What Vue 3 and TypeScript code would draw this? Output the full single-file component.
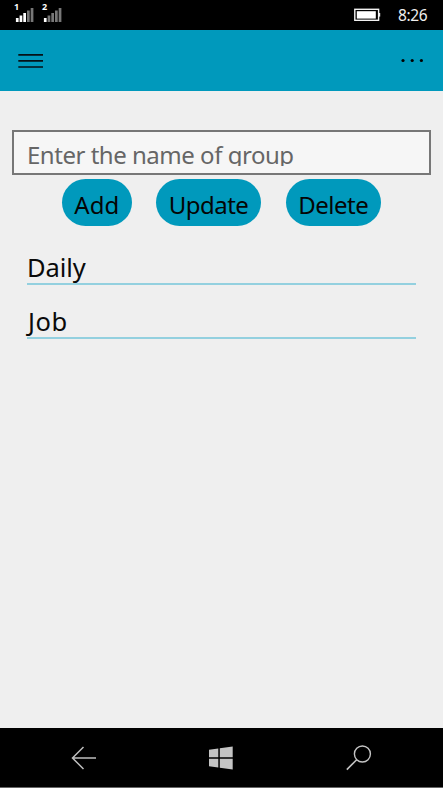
<script setup lang="ts">
import { ref } from 'vue'

interface Action {
  label: string
  kind: string
}

const actions: Action[] = [
  { label: 'Add', kind: 'add' },
  { label: 'Update', kind: 'update' },
  { label: 'Delete', kind: 'delete' },
]
const groups = ref<string[]>(['Daily', 'Job'])
const signals = [
  { slot: '1', strength: 3 },
  { slot: '2', strength: 1 },
]
const bars = [4, 6.5, 9, 11.5, 14]
</script>

<template>
  <div class="phone">
    <div class="status">
      <svg v-for="s in signals" :key="s.slot" class="signal" width="20" height="20" viewBox="0 0 20 20">
        <text x="0" y="6.3" class="slot">{{ s.slot }}</text>
        <rect
          v-for="(h, i) in bars"
          :key="i"
          :x="1.9 + i * 3.7"
          :y="18 - h"
          width="2.7"
          :height="h"
          :fill="i < s.strength ? '#fff' : '#777'"
        />
      </svg>
      <svg class="battery" width="27" height="14" viewBox="0 0 27 14">
        <rect x="0.8" y="1.3" width="23.8" height="11" fill="none" stroke="#f2f2f2" stroke-width="1.4" />
        <rect x="2.8" y="3.2" width="19" height="7.4" fill="#fff" />
        <rect x="24.6" y="5" width="1.6" height="3.6" fill="#eee" />
      </svg>
      <span class="clock">8:26</span>
    </div>

    <header class="appbar">
      <svg class="menu" width="26" height="16" viewBox="0 0 26 16">
        <path d="M0.3 1.8H25M0.3 7.9H25M0.3 14H25" stroke="#061116" stroke-width="1.7" fill="none" />
      </svg>
      <svg class="more" width="24" height="6" viewBox="0 0 24 6">
        <circle cx="2" cy="2.5" r="1.6" />
        <circle cx="11.2" cy="2.5" r="1.6" />
        <circle cx="20.4" cy="2.5" r="1.6" />
      </svg>
    </header>

    <main class="content">
      <div class="field"><span class="placeholder">Enter the name of group</span></div>
      <div class="actions">
        <button v-for="a in actions" :key="a.kind" class="action" :class="a.kind">{{ a.label }}</button>
      </div>
      <ul class="groups">
        <li v-for="g in groups" :key="g" :class="g.toLowerCase()"><span>{{ g }}</span></li>
      </ul>
    </main>

    <nav class="navbar">
      <svg class="back" width="26" height="24" viewBox="0 0 26 24">
        <path d="M25 12H1.5M12.5 1L1.5 12L12.5 23" fill="none" stroke="#bdbdbd" stroke-width="1.5" />
      </svg>
      <svg class="home" width="24" height="24" viewBox="0 0 24 24" fill="#c4c4c4">
        <path d="M0 3.8L9.3 2.5V11.3H0ZM10.8 2.2L23.7 0.4V11.3H10.8ZM0 12.7H9.3V21.5L0 20.2ZM10.8 12.7H23.7V23.6L10.8 21.8Z" />
      </svg>
      <svg class="find" width="26" height="26" viewBox="0 0 26 26" fill="none" stroke="#c4c4c4">
        <circle cx="16.4" cy="9" r="8" stroke-width="1.4" />
        <path d="M10.7 14.7L0.8 24.6" stroke-width="1.6" />
      </svg>
    </nav>
  </div>
</template>

<style>
body {
  background: #efefef;
}
</style>

<style scoped>
.phone {
  width: 443px;
  height: 788px;
  display: flex;
  flex-direction: column;
  overflow: hidden;
  background: #efefef;
  font-family: "Noto Sans", "Open Sans", sans-serif;
  color: #0a0a0a;
}
svg {
  display: block;
  flex: none;
}
.status {
  box-sizing: border-box;
  height: 29.5px;
  flex: none;
  display: flex;
  align-items: flex-start;
  background: #000;
  padding: 4px 14px 0 14px;
}
.signal {
  margin-right: 7.5px;
  overflow: visible;
}
.slot {
  font: bold 9px "Open Sans", sans-serif;
  fill: #fff;
}
.battery {
  margin: 4px 0 0 auto;
}
.clock {
  margin-left: 17px;
  width: 31px;
  font-size: 15.5px;
  line-height: 22px;
  color: #eee;
  white-space: nowrap;
  letter-spacing: -0.4px;
}
.appbar {
  box-sizing: border-box;
  height: 61.5px;
  flex: none;
  display: flex;
  align-items: center;
  justify-content: space-between;
  padding: 1px 18.5px 0 18px;
  background: #0099bc;
}
.content {
  flex: 1;
  padding: 39px 12px 0;
}
.field {
  box-sizing: border-box;
  width: 418.5px;
  height: 44.5px;
  border: 2.5px solid #777;
  background: #f6f6f6;
  padding: 10px 13px 0;
}
.placeholder {
  display: block;
  height: 24px;
  overflow: hidden;
  font-size: 24px;
  line-height: 25px;
  white-space: nowrap;
  color: #666;
  letter-spacing: -0.48px;
}
.actions {
  display: flex;
  gap: 24.5px;
  margin: 4.5px 0 0 50px;
}
.action {
  box-sizing: border-box;
  height: 47px;
  border: 0;
  border-radius: 24px;
  padding: 4px 0 0;
  background: #0099bc;
  color: #050505;
  font-family: inherit;
  font-size: 24px;
  line-height: 43px;
  text-align: center;
  white-space: nowrap;
  letter-spacing: -0.5px;
}
.add {
  width: 69.5px;
  letter-spacing: 0;
}
.update {
  width: 105px;
}
.delete {
  width: 95.5px;
}
.groups {
  list-style: none;
  margin: 5px 3px 0 15px;
  padding: 0;
  width: 389px;
}
.groups li {
  box-sizing: border-box;
  height: 54px;
  padding-top: 19px;
  border-bottom: 2px solid #93d0df;
  font-size: 25.5px;
  line-height: 34px;
}
.groups span {
  display: block;
}
.groups .daily {
  letter-spacing: -0.1px;
}
.groups .job span {
  padding-left: 1px;
  letter-spacing: 0.6px;
}
.navbar {
  box-sizing: border-box;
  height: 60px;
  flex: none;
  display: flex;
  align-items: center;
  background: #000;
  border-bottom: 1px solid #666;
}
.back {
  margin-left: 71px;
}
.home {
  margin-left: 112px;
}
.find {
  margin-left: 113px;
}
</style>
